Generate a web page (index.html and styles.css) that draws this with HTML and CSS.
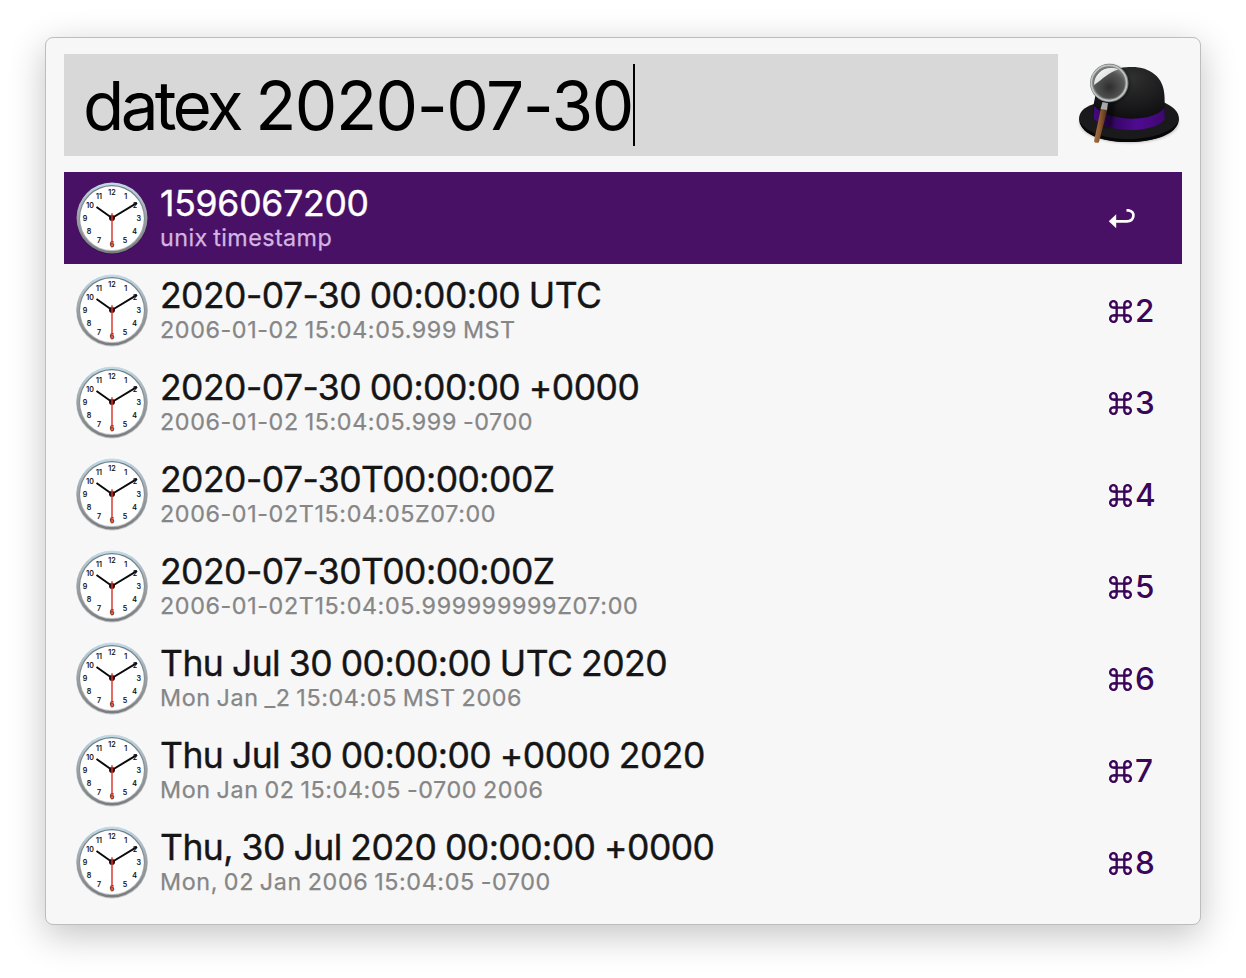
FILE: index.html
```html
<!DOCTYPE html>
<html lang="en">
<head>
<meta charset="utf-8">
<title>Launcher</title>
<link rel="stylesheet" href="styles.css">
</head>
<body>
<svg class="defs" width="0" height="0" aria-hidden="true">
  <defs>
    <linearGradient id="rim" x1="0" y1="0" x2="0" y2="1">
      <stop offset="0" stop-color="#c3dcea"/><stop offset=".5" stop-color="#9aa0a4"/><stop offset="1" stop-color="#777b7e"/>
    </linearGradient>
    <linearGradient id="rimIn" x1="0" y1="0" x2="0" y2="1">
      <stop offset="0" stop-color="#6d7f86"/><stop offset=".5" stop-color="#8c9194"/><stop offset="1" stop-color="#c4c8ca"/>
    </linearGradient>
    <symbol id="clock" viewBox="0 0 76 76">
      <circle cx="38" cy="38.8" r="35.8" fill="#000" opacity=".2"/>
      <circle cx="38" cy="38" r="35.5" fill="url(#rim)"/>
      <circle cx="38" cy="38" r="33" fill="url(#rimIn)"/>
      <circle cx="38" cy="38.2" r="31.9" fill="#fff"/>
      <g class="numerals">
        <text x="38" y="15.2">12</text><text x="51.7" y="18.7">1</text><text x="61" y="28.2">2</text>
        <text x="64.7" y="41">3</text><text x="60.7" y="54">4</text><text x="51" y="63.4">5</text>
        <text x="38" y="67">6</text><text x="25" y="63.4">7</text><text x="15" y="54">8</text>
        <text x="11" y="41">9</text><text x="16" y="28.2">10</text><text x="25" y="18.7">11</text>
      </g>
      <path d="M38 38L22.5 27M38 38L63 22.8" stroke="#0a0a0a" stroke-width="2" fill="none"/>
      <circle cx="38" cy="38" r="3" fill="#2b0808"/>
      <path d="M38 33.2V67.5" stroke="#d8352b" stroke-opacity=".85" stroke-width="1.7"/>
    </symbol>
    <symbol id="cmd" viewBox="0 0 24 24">
      <path d="M8 8H16V16H8ZM8 8V4.7A3.4 3.4 0 1 0 4.6 8ZM16 8V4.7A3.4 3.4 0 1 1 19.4 8ZM8 16V19.3A3.4 3.4 0 1 1 4.6 16ZM16 16V19.3A3.4 3.4 0 1 0 19.4 16Z" fill="none" stroke="currentColor" stroke-width="2.5"/>
      <path d="M4.6 8H8M16 8H19.4M4.6 16H8M16 16H19.4" stroke="currentColor" stroke-width="2.5"/>
    </symbol>
  </defs>
</svg>
<main class="window">
  <header class="bar">
    <div class="search"><span class="query"><span class="keyword">datex </span>2020-07-30</span><span class="caret"></span></div>
    <svg class="hat" viewBox="0 0 140 110">
      <defs>
        <radialGradient id="crown" cx=".55" cy=".2" r=".8"><stop offset="0" stop-color="#303030"/><stop offset=".55" stop-color="#1c1b1d"/><stop offset="1" stop-color="#0c0c0d"/></radialGradient>
        <radialGradient id="lens" cx=".5" cy=".62" r=".6"><stop offset="0" stop-color="#2e2e2e"/><stop offset=".7" stop-color="#575757"/><stop offset="1" stop-color="#858585"/></radialGradient>
        <linearGradient id="shine" x1="0" y1="0" x2="1" y2="1"><stop offset="0" stop-color="#fff"/><stop offset="1" stop-color="#c4c4c4"/></linearGradient>
        <linearGradient id="band" x1="0" y1="0" x2="1" y2="0"><stop offset="0" stop-color="#430a7c"/><stop offset=".25" stop-color="#320661"/><stop offset=".6" stop-color="#500b91"/><stop offset="1" stop-color="#3d0870"/></linearGradient>
        <linearGradient id="wood" x1="0" y1="0" x2="1" y2=".15"><stop offset="0" stop-color="#b27a4c"/><stop offset=".5" stop-color="#8d5930"/><stop offset="1" stop-color="#4a2b16"/></linearGradient>
        <filter id="soft" x="-20%" y="-20%" width="140%" height="140%"><feGaussianBlur stdDeviation="1.5"/></filter>
      </defs>
      <ellipse cx="69" cy="73" rx="49" ry="19.5" fill="#000" opacity=".3" filter="url(#soft)"/>
      <path d="M34 54C24 57 19 62 19 69C19 82 40 92 68 92S119 82 119 69C119 61 112 56 103 52Z" fill="#1a191b"/>
      <path d="M20 72C26 82 44 89 68 89S112 82 118 72C116 84 96 92 68 92S22 84 20 72Z" fill="#070707"/>
      <path d="M33 58C36 42 38 30 48 23C55 18 64 17 72 17C90 17 104 27 104.500 46L105 64C96 76 44 76 34 65Z" fill="url(#crown)"/>
      <path d="M34 56C48 72 92 73 104.500 58V70C92 84 47 83 34 69Z" fill="url(#band)"/>
      <path d="M46 56L56 50L52 78L43 77Z" fill="#000" opacity=".4" filter="url(#soft)"/>
      <path d="M41 58L47.500 59L39 92C38 93.500 34 93 34 91Z" fill="url(#wood)"/>
      <path d="M42.500 52L48 53L47 60L40.500 59Z" fill="#a7a9aa"/>
      <circle cx="51" cy="34" r="18.5" fill="#000" opacity=".45" filter="url(#soft)"/>
      <circle cx="49.300" cy="33" r="17.400" fill="url(#lens)" stroke="#777a7b" stroke-width="3.600"/>
      <circle cx="49" cy="33" r="17.600" fill="none" stroke="#c0c3c3" stroke-width="1.700"/>
      <path d="M34 35C34 25 42 17.500 52 18C55 18 57 18.500 58 19.500C49 22 43 29 34 35Z" fill="url(#shine)"/>
    </svg>
  </header>
  <ul class="results">
    <li class="row selected"><svg class="clock"><use href="#clock"/></svg><div class="text"><div class="title">1596067200</div><div class="sub">unix timestamp</div></div>
      <svg class="return" viewBox="0 0 28 24"><path d="M18.500 3.300H20.500C24 3.800 26 6.300 25.300 9.500C24.700 12.500 22.500 14.300 19 14.300H7" fill="none" stroke="currentColor" stroke-width="2.700"/><path d="M.8 14.300L8.200 7.300V21.300Z" fill="currentColor"/></svg></li>
    <li class="row"><svg class="clock"><use href="#clock"/></svg><div class="text"><div class="title">2020-07-30 00:00:00 UTC</div><div class="sub">2006-01-02 15:04:05.999 MST</div></div><div class="key"><svg class="cmd"><use href="#cmd"/></svg>2</div></li>
    <li class="row"><svg class="clock"><use href="#clock"/></svg><div class="text"><div class="title">2020-07-30 00:00:00 +0000</div><div class="sub">2006-01-02 15:04:05.999 -0700</div></div><div class="key"><svg class="cmd"><use href="#cmd"/></svg>3</div></li>
    <li class="row"><svg class="clock"><use href="#clock"/></svg><div class="text"><div class="title">2020-07-30T00:00:00Z</div><div class="sub">2006-01-02T15:04:05Z07:00</div></div><div class="key"><svg class="cmd"><use href="#cmd"/></svg>4</div></li>
    <li class="row"><svg class="clock"><use href="#clock"/></svg><div class="text"><div class="title">2020-07-30T00:00:00Z</div><div class="sub">2006-01-02T15:04:05.999999999Z07:00</div></div><div class="key"><svg class="cmd"><use href="#cmd"/></svg>5</div></li>
    <li class="row"><svg class="clock"><use href="#clock"/></svg><div class="text"><div class="title">Thu Jul 30 00:00:00 UTC 2020</div><div class="sub">Mon Jan _2 15:04:05 MST 2006</div></div><div class="key"><svg class="cmd"><use href="#cmd"/></svg>6</div></li>
    <li class="row"><svg class="clock"><use href="#clock"/></svg><div class="text"><div class="title">Thu Jul 30 00:00:00 +0000 2020</div><div class="sub">Mon Jan 02 15:04:05 -0700 2006</div></div><div class="key"><svg class="cmd"><use href="#cmd"/></svg>7</div></li>
    <li class="row"><svg class="clock"><use href="#clock"/></svg><div class="text"><div class="title">Thu, 30 Jul 2020 00:00:00 +0000</div><div class="sub">Mon, 02 Jan 2006 15:04:05 -0700</div></div><div class="key"><svg class="cmd"><use href="#cmd"/></svg>8</div></li>
  </ul>
</main>
</body>
</html>
```
FILE: styles.css
```css
* { box-sizing: border-box; }
body {
  margin: 0;
  padding: 37px 45px;
  height: 978px;
  background: #fff;
  font-family: Inter, "Liberation Sans", sans-serif;
  overflow: hidden;
}
.defs { display: block; }
.window {
  width: 1156px;
  height: 888px;
  padding: 16px 18px;
  border: 1px solid #bdbdbd;
  border-radius: 8px;
  background: #f7f7f7;
  box-shadow: 0 10px 36px rgba(0, 0, 0, .24);
}
.bar { display: flex; height: 102px; margin-bottom: 16px; }
.search {
  display: flex;
  align-items: center;
  width: 994px;
  padding-left: 19px;
  background: #d8d8d8;
}
.query {
  padding-top: 2px;
  font-size: 67.500px;
  font-weight: 400;
  line-height: 100px;
  white-space: pre;
  letter-spacing: -1.500px;
  color: #000;
}
.keyword { letter-spacing: -3.700px; }
.caret { width: 2px; height: 82px; background: #000; }
.hat { width: 140px; height: 110px; margin: -4px -18px 0 2px; flex: none; }
.results { margin: 0; padding: 0; list-style: none; }
.row {
  display: flex;
  width: 1118px;
  height: 92px;
  padding-left: 10px;
  color: #151515;
}
.clock { width: 76px; height: 76px; margin-top: 7.500px; flex: none; }
.numerals { font: 500 7.200px Inter, sans-serif; text-anchor: middle; fill: #111; stroke: #111; stroke-width: .15px; }
.text { flex: 1; padding: 10px 0 0 10px; white-space: pre; }
.title { font-size: 35.500px; line-height: 43px; letter-spacing: -.54px; word-spacing: -.8px; font-weight: 400; -webkit-text-stroke: .4px currentColor; }
.sub { font-size: 23.300px; line-height: 28px; letter-spacing: .62px; word-spacing: -1.300px; font-weight: 400; -webkit-text-stroke: .25px currentColor; color: #868686; margin-top: -1px; }
.selected { background: #491165; color: #fff; }
.selected .title { letter-spacing: -.22px; }
.selected .sub { color: #d3b4e2; letter-spacing: .42px; }
.return { width: 28px; height: 24px; margin: 35px 46px 0 0; }
.key {
  display: flex;
  width: 74px;
  padding-top: 27px;
  font-size: 31.500px;
  line-height: 40px;
  font-weight: 500;
  color: #3b0559;
}
.cmd { width: 23px; height: 23px; margin: 8.500px 3px 0 1px; }
```
